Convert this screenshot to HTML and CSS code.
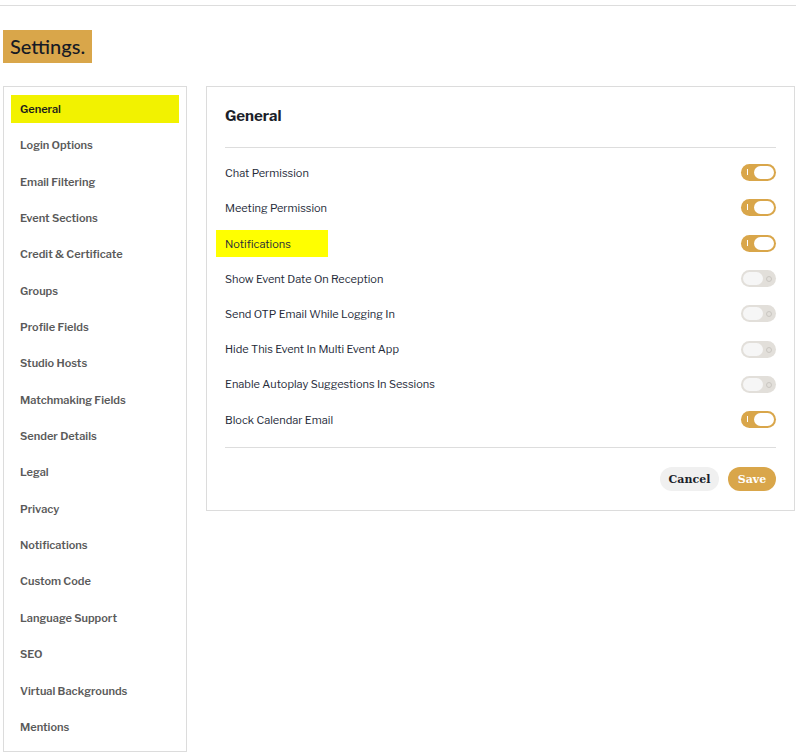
FILE: index.html
```html
<!DOCTYPE html>
<html lang="en">
<head>
    <meta charset="UTF-8">
    <meta name="viewport" content="width=device-width, initial-scale=1.0">
    <title>Settings</title>
    <link rel="stylesheet" href="styles.css">
</head>
<body>
    <div class="topbar"></div>

    <div class="page">
        <h1 class="page-title">Settings.</h1>

        <div class="layout">
            <ul class="side-menu">
                <li class="active">General</li>
                <li>Login Options</li>
                <li>Email Filtering</li>
                <li>Event Sections</li>
                <li>Credit &amp; Certificate</li>
                <li>Groups</li>
                <li>Profile Fields</li>
                <li>Studio Hosts</li>
                <li>Matchmaking Fields</li>
                <li>Sender Details</li>
                <li>Legal</li>
                <li>Privacy</li>
                <li>Notifications</li>
                <li>Custom Code</li>
                <li>Language Support</li>
                <li>SEO</li>
                <li>Virtual Backgrounds</li>
                <li>Mentions</li>
            </ul>

            <div class="panel">
                <h2>General</h2>
                <div class="rows">
                    <div class="row"><span class="label">Chat Permission</span><span class="toggle on"></span></div>
                    <div class="row"><span class="label">Meeting Permission</span><span class="toggle on"></span></div>
                    <div class="row"><span class="label mark">Notifications</span><span class="toggle on"></span></div>
                    <div class="row"><span class="label">Show Event Date On Reception</span><span class="toggle"></span></div>
                    <div class="row"><span class="label">Send OTP Email While Logging In</span><span class="toggle"></span></div>
                    <div class="row"><span class="label">Hide This Event In Multi Event App</span><span class="toggle"></span></div>
                    <div class="row"><span class="label">Enable Autoplay Suggestions In Sessions</span><span class="toggle"></span></div>
                    <div class="row"><span class="label">Block Calendar Email</span><span class="toggle on"></span></div>
                </div>
                <div class="actions">
                    <button class="btn cancel">Cancel</button>
                    <button class="btn save">Save</button>
                </div>
            </div>
        </div>
    </div>
</body>
</html>
```

FILE: styles.css
```css
body {
    margin: 0;
    font-family: "Libre Franklin", Inter, "Noto Sans", sans-serif;
    color: #1f2330;
    background: #ffffff;
}

.topbar {
    height: 5px;
    border-bottom: 1px solid #dddddd;
}

.page {
    padding: 0 1px 0 3px;
}

.page-title {
    display: inline-block;
    margin: 24px 0 23px;
    padding: 0 7px;
    height: 33px;
    line-height: 33px;
    background-color: #d9a64a;
    font-family: Lato, sans-serif;
    font-size: 20px;
    font-weight: 500;
    color: #161a24;
}

.layout {
    display: flex;
    align-items: flex-start;
    gap: 19px;
}

/* menu de la izquierda */
.side-menu {
    list-style: none;
    margin: 0;
    padding: 8px 7px 10px 7px;
    width: 168px;
    border: 1px solid #dcdcdc;
    display: flex;
    flex-direction: column;
    gap: 8.35px;
}

.side-menu li {
    height: 28px;
    line-height: 28px;
    padding-left: 9px;
    font-size: 11px;
    font-weight: 600;
    color: #5a5a5a;
}

.side-menu li.active {
    background-color: #f2f200;
    color: #1c1c1c;
}

.panel {
    flex: 1;
    border: 1px solid #dcdcdc;
    padding: 19px 18px 19px 18px;
}

.panel h2 {
    margin: 0;
    font-size: 15px;
    line-height: 20px;
    font-weight: 700;
    color: #1b1f2a;
    padding-bottom: 21px;
    border-bottom: 1px solid #dddddd;
}

.rows {
    padding: 7px 0 10px;
    border-bottom: 1px solid #dddddd;
}

.row {
    height: 35.3px;
    display: flex;
    align-items: center;
    justify-content: space-between;
}

.label {
    font-size: 11px;
    color: #262b3a;
}

.label.mark {
    background-color: #ffff00;
    margin-left: -9px;
    padding: 7px 37px 6px 9px;
}

/* interruptores */
.toggle {
    position: relative;
    width: 35px;
    height: 17px;
    border-radius: 9px;
    background-color: #e2dfda;
    box-sizing: border-box;
}

.toggle::before {
    content: "";
    position: absolute;
    top: 2px;
    left: 2px;
    width: 20px;
    height: 13px;
    border-radius: 7px;
    background-color: #f6f6f6;
}

.toggle::after {
    content: "";
    position: absolute;
    top: 6px;
    right: 4px;
    width: 4px;
    height: 4px;
    border: 1px solid #c9c6c1;
    border-radius: 50%;
}

.toggle.on {
    background-color: #d9a64a;
}

.toggle.on::before {
    left: 13px;
    background-color: #ffffff;
}

.toggle.on::after {
    top: 5px;
    left: 6px;
    right: auto;
    width: 0;
    height: 6px;
    border: none;
    border-left: 1px solid #ffffff;
    border-radius: 0;
}

.actions {
    display: flex;
    justify-content: flex-end;
    gap: 9px;
    padding-top: 19px;
}

.btn {
    height: 24px;
    border: none;
    border-radius: 12px;
    padding: 0 8px;
    font-family: "DejaVu Serif", serif;
    font-size: 11px;
    font-weight: 700;
    cursor: pointer;
}

.btn.cancel {
    width: 59px;
    background-color: #f0f0f0;
    color: #1b1f2a;
}

.btn.save {
    width: 48px;
    background-color: #d9a64a;
    color: #ffffff;
}
```
